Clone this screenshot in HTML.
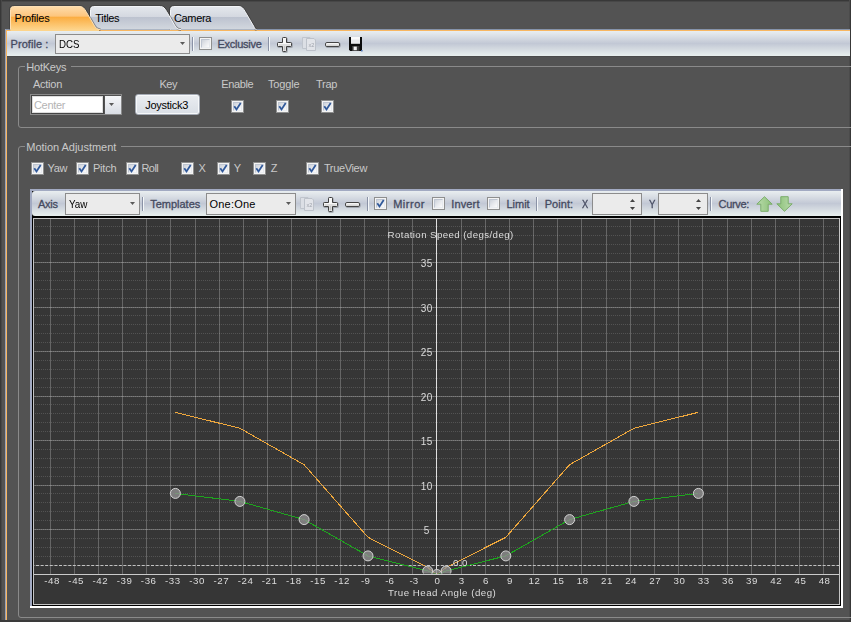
<!DOCTYPE html>
<html><head><meta charset="utf-8"><title>Profiles</title>
<style>
html,body{margin:0;padding:0}
body{width:851px;height:622px;overflow:hidden;background:#535353;position:relative;font-family:"Liberation Sans",Arial,sans-serif}
.abs,.t,.cb,.combo,.sep,.ic,.arr,.ln{position:absolute}
.t{white-space:nowrap;line-height:0;height:0;display:block}
.t::before{content:"";display:inline-block;height:0}
.b{-webkit-text-stroke:0.3px currentColor}
.cb{width:11px;height:11px;border:1px solid #8e8f8f;background:#f4f4f4}
.cbi{position:absolute;left:1px;top:1px;width:9px;height:9px;box-sizing:border-box;border:1px solid #bfc6d2;border-right-color:#e6e9ee;border-bottom-color:#eaedf1;background:linear-gradient(135deg,#cdd2da 0%,#e6e8ec 50%,#fbfbfb 100%)}
.combo{box-sizing:border-box;border:1px solid #8c8c8c;background:#ebebeb}
.sep{width:1px;background:#8a92a6;box-shadow:1px 0 0 #f4f7f9}
.tb{background:linear-gradient(#e9eef0 0%,#d7dce3 25%,#c2c8d5 50%,#d5dbe1 74%,#e8efee 100%)}
</style></head><body>
<!-- window frame -->
<div class="abs" style="left:0;top:0;width:851px;height:2px;background:linear-gradient(#383838 50%,#474747 50%)"></div>
<div class="abs" style="left:0;top:0;width:2px;height:622px;background:linear-gradient(90deg,#383838 50%,#474747 50%)"></div>
<div class="abs" style="left:849px;top:0;width:2px;height:622px;background:linear-gradient(90deg,#4b4b4b 50%,#383838 50%)"></div>
<div class="abs" style="left:0;top:620px;width:851px;height:2px;background:#3a3a3a"></div>
<!-- tab page border -->
<div class="abs" style="left:5px;top:29px;width:845px;height:1px;background:#8593ab"></div>
<div class="abs" style="left:5px;top:29px;width:1px;height:591px;background:#9aa2b8"></div>
<div class="abs" style="left:6px;top:30px;width:844px;height:1px;background:#f8b660"></div>
<div class="abs" style="left:6px;top:30px;width:1px;height:590px;background:#f8b660"></div>
<svg style="position:absolute;left:0;top:0" width="300" height="32" viewBox="0 0 300 32">
<defs>
<linearGradient id="gi" x1="0" y1="0" x2="0" y2="1"><stop offset="0" stop-color="#e4e7ec"/><stop offset=".45" stop-color="#d4d8e0"/><stop offset=".46" stop-color="#bcc2cf"/><stop offset="1" stop-color="#d3d8df"/></linearGradient>
<linearGradient id="go" x1="0" y1="0" x2="0" y2="1"><stop offset="0" stop-color="#fedcab"/><stop offset=".42" stop-color="#fdc57d"/><stop offset=".46" stop-color="#fbad41"/><stop offset="1" stop-color="#fdd48b"/></linearGradient>
</defs>
<path d="M170.5 29.6 V9.5 Q170.5 6.5 173.5 6.5 H239 C242 6.5 243.6 8.9 245 11.4 L253.6 26.1 C254.6 27.9 255.2 29.6 256.5 29.6" fill="none" stroke="#2a2a2a" stroke-opacity=".45" stroke-width="2.6"/>
<path d="M170.5 29.6 V9.5 Q170.5 6.5 173.5 6.5 H239 C242 6.5 243.6 8.9 245 11.4 L253.6 26.1 C254.6 27.9 255.2 29.6 256.5 29.6 Z" fill="url(#gi)"/>
<path d="M170.5 29.6 V9.5 Q170.5 6.5 173.5 6.5 H239 C242 6.5 243.6 8.9 245 11.4 L253.6 26.1 C254.6 27.9 255.2 29.6 256.5 29.6" fill="none" stroke="#f2f4f7" stroke-width="1"/>
<path d="M90.5 29.6 V9.5 Q90.5 6.5 93.5 6.5 H160.5 C163.5 6.5 165.1 8.9 166.5 11.4 L174.5 25.1 C176.1 27.9 177.5 29.6 181.0 29.6" fill="none" stroke="#2a2a2a" stroke-opacity=".45" stroke-width="2.6"/>
<path d="M90.5 29.6 V9.5 Q90.5 6.5 93.5 6.5 H160.5 C163.5 6.5 165.1 8.9 166.5 11.4 L174.5 25.1 C176.1 27.9 177.5 29.6 181.0 29.6 Z" fill="url(#gi)"/>
<path d="M90.5 29.6 V9.5 Q90.5 6.5 93.5 6.5 H160.5 C163.5 6.5 165.1 8.9 166.5 11.4 L174.5 25.1 C176.1 27.9 177.5 29.6 181.0 29.6" fill="none" stroke="#f2f4f7" stroke-width="1"/>
<path d="M10.5 29.6 V9.5 Q10.5 6.5 13.5 6.5 H80 C83 6.5 84.6 8.9 86 11.4 L94 25.1 C95.6 27.9 97 29.6 100.5 29.6" fill="none" stroke="#2a2a2a" stroke-opacity=".45" stroke-width="2.6"/>
<path d="M10.5 29.6 V9.5 Q10.5 6.5 13.5 6.5 H80 C83 6.5 84.6 8.9 86 11.4 L94 25.1 C95.6 27.9 97 29.6 100.5 29.6 Z" fill="url(#go)"/><rect x="10.5" y="29" width="88.5" height="2" fill="#fdd48b"/>
<path d="M10.5 29.6 V9.5 Q10.5 6.5 13.5 6.5 H80 C83 6.5 84.6 8.9 86 11.4 L94 25.1 C95.6 27.9 97 29.6 100.5 29.6" fill="none" stroke="#fde0b4" stroke-width="1"/>
</svg>
<!-- toolbar 1 -->
<div class="abs tb" style="left:7px;top:31px;width:843px;height:25px"></div>
<div class="abs" style="left:7px;top:56px;width:843px;height:1px;background:#4a4a4a"></div>
<div class="combo " style="left:55px;top:34px;width:135px;height:20px"></div><svg class="arr" style="left:180px;top:41.8px" width="5" height="3" viewBox="0 0 5 3"><path d="M0 0H5L2.5 3Z" fill="#5a5a5a"/></svg>
<div class="sep" style="left:192px;top:37px;height:14px"></div>
<div class="cb" style="left:199px;top:37px"><div class="cbi"></div></div>
<div class="sep" style="left:268px;top:37px;height:14px"></div>
<svg class="ic" style="left:277px;top:37px" width="16" height="16" viewBox="0 0 16 16"><path d="M5.5 1.3 Q5.5 .5 6.3 .5 H8.7 Q9.5 .5 9.5 1.3 V5.5 H13.7 Q14.5 5.5 14.5 6.3 V8.7 Q14.5 9.5 13.7 9.5 H9.5 V13.7 Q9.5 14.5 8.7 14.5 H6.3 Q5.5 14.5 5.5 13.7 V9.5 H1.3 Q.5 9.5 .5 8.7 V6.3 Q.5 5.5 1.3 5.5 H5.5 Z" fill="none" stroke="#3a3f4a" stroke-opacity=".3" stroke-width="1.4" transform="translate(.6 .7)"/><path d="M5.5 1.3 Q5.5 .5 6.3 .5 H8.7 Q9.5 .5 9.5 1.3 V5.5 H13.7 Q14.5 5.5 14.5 6.3 V8.7 Q14.5 9.5 13.7 9.5 H9.5 V13.7 Q9.5 14.5 8.7 14.5 H6.3 Q5.5 14.5 5.5 13.7 V9.5 H1.3 Q.5 9.5 .5 8.7 V6.3 Q.5 5.5 1.3 5.5 H5.5 Z" fill="#f7f7f7" stroke="#3e3e3e" stroke-width="1" stroke-linejoin="round"/><path d="M6.5 9 H8.5 V13.5 H6.5Z M1.5 7.6 H13.5 V8.5 H1.5Z" fill="#c4c4c4"/></svg>
<svg class="ic" style="left:302px;top:37px" width="15" height="15" viewBox="0 0 15 15"><path d="M.5 .5 H8 L9.5 2 V11.5 H.5 Z" fill="#dcdfe5" stroke="#c0c5cd"/><path d="M4.5 1.5 H12 L13.5 3 V13.5 H4.5 Z" fill="#e2e4e9" stroke="#bdc2ca"/><g filter="url(#idf)"><text x="6.4" y="9.9" font-size="5.6" font-family="Liberation Sans, sans-serif" fill="#9fa3ac">x2</text></g></svg>
<svg class="ic" style="left:325px;top:42px" width="17" height="7" viewBox="0 0 17 7"><rect x="1.1" y="1.2" width="14" height="4" rx="1.4" fill="none" stroke="#3a3f4a" stroke-opacity=".3" stroke-width="1.4"/><rect x=".5" y=".5" width="14" height="4" rx="1.4" fill="#f5f5f5" stroke="#444" stroke-width="1"/><rect x="1.5" y="2.6" width="12" height="1" fill="#c6c6c6"/></svg>
<svg class="ic" style="left:349px;top:37px" width="14" height="15" viewBox="0 0 14 15"><path d="M0 0 H13 V14 H1.2 L0 12.8 Z" fill="#0c0c0c"/><rect x="2" y="0" width="9" height="6.8" fill="#e9eaec"/><rect x="2" y="0" width="9" height="2.5" fill="#fafafa"/><rect x="3" y="9" width="7.4" height="5" fill="#3a3a3a"/><rect x="4.6" y="9.6" width="3.2" height="3.6" fill="#f0f0f0"/><rect x="12" y="13" width="1.6" height="1.4" fill="#4a6fb0"/></svg>
<!-- HotKeys group -->
<div class="abs" style="left:18px;top:66px;width:840px;height:62px;border:1px solid #8a8a8a;border-radius:3px;box-sizing:border-box"></div>
<div class="abs" style="left:25px;top:64px;width:46px;height:6px;background:#535353"></div>
<!-- action combo -->
<div class="abs" style="left:30px;top:94px;width:92px;height:21px;box-sizing:border-box;border:1px solid #8a8a8a;background:#535353"></div>
<div class="abs" style="left:33px;top:97px;width:69px;height:15px;background:#fff;box-shadow:0 0 0 1px #ddd,0 0 0 2px #454545"></div>
<div class="abs" style="left:105px;top:96px;width:16px;height:18px;background:linear-gradient(#f6f7f9,#d9dde4)"></div>
<svg class="arr" style="left:109px;top:102.5px" width="5" height="3" viewBox="0 0 5 3"><path d="M0 0H5L2.5 3Z" fill="#5a5a5a"/></svg>
<!-- Joystick3 button -->
<div class="abs" style="left:135px;top:94px;width:65px;height:21px;box-sizing:border-box;border:1px solid #a4aab4;background:linear-gradient(#eaedf1,#d9dee5);border-radius:3px;box-shadow:inset 0 0 0 1px #f6f8fa"></div>
<div class="cb" style="left:231px;top:100px"><div class="cbi"></div><svg width="13" height="13" viewBox="0 0 13 13" style="position:absolute;left:-1px;top:-1px"><path d="M3.3 6.2 L5.5 9.4 L9.7 2.9" fill="none" stroke="#31599a" stroke-width="1.8" stroke-linecap="butt" stroke-linejoin="miter"/></svg></div>
<div class="cb" style="left:276px;top:100px"><div class="cbi"></div><svg width="13" height="13" viewBox="0 0 13 13" style="position:absolute;left:-1px;top:-1px"><path d="M3.3 6.2 L5.5 9.4 L9.7 2.9" fill="none" stroke="#31599a" stroke-width="1.8" stroke-linecap="butt" stroke-linejoin="miter"/></svg></div>
<div class="cb" style="left:321px;top:100px"><div class="cbi"></div><svg width="13" height="13" viewBox="0 0 13 13" style="position:absolute;left:-1px;top:-1px"><path d="M3.3 6.2 L5.5 9.4 L9.7 2.9" fill="none" stroke="#31599a" stroke-width="1.8" stroke-linecap="butt" stroke-linejoin="miter"/></svg></div>
<!-- Motion Adjustment group -->
<div class="abs" style="left:18px;top:146px;width:840px;height:472px;border:1px solid #8a8a8a;border-radius:3px;box-sizing:border-box"></div>
<div class="abs" style="left:25px;top:144px;width:96px;height:6px;background:#535353"></div>
<div class="cb" style="left:31px;top:162px"><div class="cbi"></div><svg width="13" height="13" viewBox="0 0 13 13" style="position:absolute;left:-1px;top:-1px"><path d="M3.3 6.2 L5.5 9.4 L9.7 2.9" fill="none" stroke="#31599a" stroke-width="1.8" stroke-linecap="butt" stroke-linejoin="miter"/></svg></div>
<div class="cb" style="left:76px;top:162px"><div class="cbi"></div><svg width="13" height="13" viewBox="0 0 13 13" style="position:absolute;left:-1px;top:-1px"><path d="M3.3 6.2 L5.5 9.4 L9.7 2.9" fill="none" stroke="#31599a" stroke-width="1.8" stroke-linecap="butt" stroke-linejoin="miter"/></svg></div>
<div class="cb" style="left:126px;top:162px"><div class="cbi"></div><svg width="13" height="13" viewBox="0 0 13 13" style="position:absolute;left:-1px;top:-1px"><path d="M3.3 6.2 L5.5 9.4 L9.7 2.9" fill="none" stroke="#31599a" stroke-width="1.8" stroke-linecap="butt" stroke-linejoin="miter"/></svg></div>
<div class="cb" style="left:181px;top:162px"><div class="cbi"></div><svg width="13" height="13" viewBox="0 0 13 13" style="position:absolute;left:-1px;top:-1px"><path d="M3.3 6.2 L5.5 9.4 L9.7 2.9" fill="none" stroke="#31599a" stroke-width="1.8" stroke-linecap="butt" stroke-linejoin="miter"/></svg></div>
<div class="cb" style="left:217px;top:162px"><div class="cbi"></div><svg width="13" height="13" viewBox="0 0 13 13" style="position:absolute;left:-1px;top:-1px"><path d="M3.3 6.2 L5.5 9.4 L9.7 2.9" fill="none" stroke="#31599a" stroke-width="1.8" stroke-linecap="butt" stroke-linejoin="miter"/></svg></div>
<div class="cb" style="left:253px;top:162px"><div class="cbi"></div><svg width="13" height="13" viewBox="0 0 13 13" style="position:absolute;left:-1px;top:-1px"><path d="M3.3 6.2 L5.5 9.4 L9.7 2.9" fill="none" stroke="#31599a" stroke-width="1.8" stroke-linecap="butt" stroke-linejoin="miter"/></svg></div>
<div class="cb" style="left:306px;top:162px"><div class="cbi"></div><svg width="13" height="13" viewBox="0 0 13 13" style="position:absolute;left:-1px;top:-1px"><path d="M3.3 6.2 L5.5 9.4 L9.7 2.9" fill="none" stroke="#31599a" stroke-width="1.8" stroke-linecap="butt" stroke-linejoin="miter"/></svg></div>
<!-- curve editor frame -->
<div class="abs" style="left:30px;top:189px;width:813px;height:419px;background:#fff"></div>
<div class="abs" style="left:30px;top:189px;width:811px;height:417px;background:#a2aac2"></div>
<div class="abs" style="left:32px;top:191px;width:809px;height:415px;background:#000"></div>
<div class="abs tb" style="left:32px;top:191px;width:809px;height:25px;border-radius:3px 0 0 3px"></div>
<div class="abs" style="left:33px;top:218px;width:807px;height:387px;background:#c4c4c4"></div>
<svg id="graph" width="805" height="385" viewBox="34 219 805 385" style="position:absolute;left:34px;top:219px" font-family="Liberation Sans, Arial, sans-serif" font-size="9.7">
<rect x="34" y="219" width="805" height="385" fill="#363636"/>
<line x1="50.5" x2="50.5" y1="219" y2="574.03" stroke="#fff" stroke-opacity="0.24"/>
<line x1="74.5" x2="74.5" y1="219" y2="574.03" stroke="#fff" stroke-opacity="0.24"/>
<line x1="98.5" x2="98.5" y1="219" y2="574.03" stroke="#fff" stroke-opacity="0.24"/>
<line x1="122.5" x2="122.5" y1="219" y2="574.03" stroke="#fff" stroke-opacity="0.24"/>
<line x1="146.5" x2="146.5" y1="219" y2="574.03" stroke="#fff" stroke-opacity="0.24"/>
<line x1="170.5" x2="170.5" y1="219" y2="574.03" stroke="#fff" stroke-opacity="0.24"/>
<line x1="195.5" x2="195.5" y1="219" y2="574.03" stroke="#fff" stroke-opacity="0.24"/>
<line x1="219.5" x2="219.5" y1="219" y2="574.03" stroke="#fff" stroke-opacity="0.24"/>
<line x1="243.5" x2="243.5" y1="219" y2="574.03" stroke="#fff" stroke-opacity="0.24"/>
<line x1="267.5" x2="267.5" y1="219" y2="574.03" stroke="#fff" stroke-opacity="0.24"/>
<line x1="291.5" x2="291.5" y1="219" y2="574.03" stroke="#fff" stroke-opacity="0.24"/>
<line x1="316.5" x2="316.5" y1="219" y2="574.03" stroke="#fff" stroke-opacity="0.24"/>
<line x1="340.5" x2="340.5" y1="219" y2="574.03" stroke="#fff" stroke-opacity="0.24"/>
<line x1="364.5" x2="364.5" y1="219" y2="574.03" stroke="#fff" stroke-opacity="0.24"/>
<line x1="388.5" x2="388.5" y1="219" y2="574.03" stroke="#fff" stroke-opacity="0.24"/>
<line x1="412.5" x2="412.5" y1="219" y2="574.03" stroke="#fff" stroke-opacity="0.24"/>
<line x1="461.5" x2="461.5" y1="219" y2="574.03" stroke="#fff" stroke-opacity="0.24"/>
<line x1="485.5" x2="485.5" y1="219" y2="574.03" stroke="#fff" stroke-opacity="0.24"/>
<line x1="509.5" x2="509.5" y1="219" y2="574.03" stroke="#fff" stroke-opacity="0.24"/>
<line x1="533.5" x2="533.5" y1="219" y2="574.03" stroke="#fff" stroke-opacity="0.24"/>
<line x1="557.5" x2="557.5" y1="219" y2="574.03" stroke="#fff" stroke-opacity="0.24"/>
<line x1="581.5" x2="581.5" y1="219" y2="574.03" stroke="#fff" stroke-opacity="0.24"/>
<line x1="606.5" x2="606.5" y1="219" y2="574.03" stroke="#fff" stroke-opacity="0.24"/>
<line x1="630.5" x2="630.5" y1="219" y2="574.03" stroke="#fff" stroke-opacity="0.24"/>
<line x1="654.5" x2="654.5" y1="219" y2="574.03" stroke="#fff" stroke-opacity="0.24"/>
<line x1="678.5" x2="678.5" y1="219" y2="574.03" stroke="#fff" stroke-opacity="0.24"/>
<line x1="702.5" x2="702.5" y1="219" y2="574.03" stroke="#fff" stroke-opacity="0.24"/>
<line x1="727.5" x2="727.5" y1="219" y2="574.03" stroke="#fff" stroke-opacity="0.24"/>
<line x1="751.5" x2="751.5" y1="219" y2="574.03" stroke="#fff" stroke-opacity="0.24"/>
<line x1="775.5" x2="775.5" y1="219" y2="574.03" stroke="#fff" stroke-opacity="0.24"/>
<line x1="799.5" x2="799.5" y1="219" y2="574.03" stroke="#fff" stroke-opacity="0.24"/>
<line x1="823.5" x2="823.5" y1="219" y2="574.03" stroke="#fff" stroke-opacity="0.24"/>
<line x1="34" x2="839" y1="529.5" y2="529.5" stroke="#fff" stroke-opacity="0.24"/>
<line x1="34" x2="839" y1="485.5" y2="485.5" stroke="#fff" stroke-opacity="0.24"/>
<line x1="34" x2="839" y1="440.5" y2="440.5" stroke="#fff" stroke-opacity="0.24"/>
<line x1="34" x2="839" y1="396.5" y2="396.5" stroke="#fff" stroke-opacity="0.24"/>
<line x1="34" x2="839" y1="351.5" y2="351.5" stroke="#fff" stroke-opacity="0.24"/>
<line x1="34" x2="839" y1="307.5" y2="307.5" stroke="#fff" stroke-opacity="0.24"/>
<line x1="34" x2="839" y1="262.5" y2="262.5" stroke="#fff" stroke-opacity="0.24"/>
<line x1="34" x2="839" y1="565.5" y2="565.5" stroke="#fff" stroke-opacity="0.15" stroke-dasharray="1 1" stroke-dashoffset="1"/>
<line x1="34" x2="839" y1="556.5" y2="556.5" stroke="#fff" stroke-opacity="0.15" stroke-dasharray="1 1" stroke-dashoffset="1"/>
<line x1="34" x2="839" y1="547.5" y2="547.5" stroke="#fff" stroke-opacity="0.15" stroke-dasharray="1 1" stroke-dashoffset="1"/>
<line x1="34" x2="839" y1="538.5" y2="538.5" stroke="#fff" stroke-opacity="0.15" stroke-dasharray="1 1" stroke-dashoffset="1"/>
<line x1="34" x2="839" y1="529.5" y2="529.5" stroke="#fff" stroke-opacity="0.15" stroke-dasharray="1 1" stroke-dashoffset="1"/>
<line x1="34" x2="839" y1="520.5" y2="520.5" stroke="#fff" stroke-opacity="0.15" stroke-dasharray="1 1" stroke-dashoffset="1"/>
<line x1="34" x2="839" y1="511.5" y2="511.5" stroke="#fff" stroke-opacity="0.15" stroke-dasharray="1 1" stroke-dashoffset="1"/>
<line x1="34" x2="839" y1="502.5" y2="502.5" stroke="#fff" stroke-opacity="0.15" stroke-dasharray="1 1" stroke-dashoffset="1"/>
<line x1="34" x2="839" y1="493.5" y2="493.5" stroke="#fff" stroke-opacity="0.15" stroke-dasharray="1 1" stroke-dashoffset="1"/>
<line x1="34" x2="839" y1="485.5" y2="485.5" stroke="#fff" stroke-opacity="0.15" stroke-dasharray="1 1" stroke-dashoffset="1"/>
<line x1="34" x2="839" y1="476.5" y2="476.5" stroke="#fff" stroke-opacity="0.15" stroke-dasharray="1 1" stroke-dashoffset="1"/>
<line x1="34" x2="839" y1="467.5" y2="467.5" stroke="#fff" stroke-opacity="0.15" stroke-dasharray="1 1" stroke-dashoffset="1"/>
<line x1="34" x2="839" y1="458.5" y2="458.5" stroke="#fff" stroke-opacity="0.15" stroke-dasharray="1 1" stroke-dashoffset="1"/>
<line x1="34" x2="839" y1="449.5" y2="449.5" stroke="#fff" stroke-opacity="0.15" stroke-dasharray="1 1" stroke-dashoffset="1"/>
<line x1="34" x2="839" y1="440.5" y2="440.5" stroke="#fff" stroke-opacity="0.15" stroke-dasharray="1 1" stroke-dashoffset="1"/>
<line x1="34" x2="839" y1="431.5" y2="431.5" stroke="#fff" stroke-opacity="0.15" stroke-dasharray="1 1" stroke-dashoffset="1"/>
<line x1="34" x2="839" y1="422.5" y2="422.5" stroke="#fff" stroke-opacity="0.15" stroke-dasharray="1 1" stroke-dashoffset="1"/>
<line x1="34" x2="839" y1="413.5" y2="413.5" stroke="#fff" stroke-opacity="0.15" stroke-dasharray="1 1" stroke-dashoffset="1"/>
<line x1="34" x2="839" y1="404.5" y2="404.5" stroke="#fff" stroke-opacity="0.15" stroke-dasharray="1 1" stroke-dashoffset="1"/>
<line x1="34" x2="839" y1="396.5" y2="396.5" stroke="#fff" stroke-opacity="0.15" stroke-dasharray="1 1" stroke-dashoffset="1"/>
<line x1="34" x2="839" y1="387.5" y2="387.5" stroke="#fff" stroke-opacity="0.15" stroke-dasharray="1 1" stroke-dashoffset="1"/>
<line x1="34" x2="839" y1="378.5" y2="378.5" stroke="#fff" stroke-opacity="0.15" stroke-dasharray="1 1" stroke-dashoffset="1"/>
<line x1="34" x2="839" y1="369.5" y2="369.5" stroke="#fff" stroke-opacity="0.15" stroke-dasharray="1 1" stroke-dashoffset="1"/>
<line x1="34" x2="839" y1="360.5" y2="360.5" stroke="#fff" stroke-opacity="0.15" stroke-dasharray="1 1" stroke-dashoffset="1"/>
<line x1="34" x2="839" y1="351.5" y2="351.5" stroke="#fff" stroke-opacity="0.15" stroke-dasharray="1 1" stroke-dashoffset="1"/>
<line x1="34" x2="839" y1="342.5" y2="342.5" stroke="#fff" stroke-opacity="0.15" stroke-dasharray="1 1" stroke-dashoffset="1"/>
<line x1="34" x2="839" y1="333.5" y2="333.5" stroke="#fff" stroke-opacity="0.15" stroke-dasharray="1 1" stroke-dashoffset="1"/>
<line x1="34" x2="839" y1="324.5" y2="324.5" stroke="#fff" stroke-opacity="0.15" stroke-dasharray="1 1" stroke-dashoffset="1"/>
<line x1="34" x2="839" y1="315.5" y2="315.5" stroke="#fff" stroke-opacity="0.15" stroke-dasharray="1 1" stroke-dashoffset="1"/>
<line x1="34" x2="839" y1="307.5" y2="307.5" stroke="#fff" stroke-opacity="0.15" stroke-dasharray="1 1" stroke-dashoffset="1"/>
<line x1="34" x2="839" y1="298.5" y2="298.5" stroke="#fff" stroke-opacity="0.15" stroke-dasharray="1 1" stroke-dashoffset="1"/>
<line x1="34" x2="839" y1="289.5" y2="289.5" stroke="#fff" stroke-opacity="0.15" stroke-dasharray="1 1" stroke-dashoffset="1"/>
<line x1="34" x2="839" y1="280.5" y2="280.5" stroke="#fff" stroke-opacity="0.15" stroke-dasharray="1 1" stroke-dashoffset="1"/>
<line x1="34" x2="839" y1="271.5" y2="271.5" stroke="#fff" stroke-opacity="0.15" stroke-dasharray="1 1" stroke-dashoffset="1"/>
<line x1="34" x2="839" y1="262.5" y2="262.5" stroke="#fff" stroke-opacity="0.15" stroke-dasharray="1 1" stroke-dashoffset="1"/>
<line x1="34" x2="839" y1="253.5" y2="253.5" stroke="#fff" stroke-opacity="0.15" stroke-dasharray="1 1" stroke-dashoffset="1"/>
<line x1="34" x2="839" y1="244.5" y2="244.5" stroke="#fff" stroke-opacity="0.15" stroke-dasharray="1 1" stroke-dashoffset="1"/>
<line x1="34" x2="839" y1="235.5" y2="235.5" stroke="#fff" stroke-opacity="0.15" stroke-dasharray="1 1" stroke-dashoffset="1"/>
<line x1="34" x2="839" y1="226.5" y2="226.5" stroke="#fff" stroke-opacity="0.15" stroke-dasharray="1 1" stroke-dashoffset="1"/>
<line x1="34" x2="839" y1="565.5" y2="565.5" stroke="#c2c2c2" stroke-width="1" stroke-dasharray="3 1.6" stroke-dashoffset="-2"/>
<line x1="436.5" x2="436.5" y1="219" y2="574.03" stroke="#e0e0e0" stroke-width="1"/>
<clipPath id="cp"><rect x="34" y="219" width="805" height="354.53"/></clipPath>
<g clip-path="url(#cp)">
<polyline points="175.4,412.3 239.9,428.3 304.1,464.7 368.0,537.3 427.7,567.5 436.9,574.5 446.1,567.5 505.8,537.3 569.6,464.7 633.9,428.3 698.4,412.3" fill="none" stroke="#f0a83c" stroke-width="1" shape-rendering="crispEdges"/>
<polyline points="175.4,493.4 239.9,501.4 304.1,519.6 368.0,555.9 427.7,571.0 436.9,574.5 446.1,571.0 505.8,555.9 569.6,519.6 633.9,501.4 698.4,493.4" fill="none" stroke="#1ea51e" stroke-width="1" shape-rendering="crispEdges"/>
<circle cx="175.4" cy="493.4" r="5" fill="#909090" fill-opacity="0.8" stroke="#d2d2d2" stroke-width="1"/>
<circle cx="239.9" cy="501.4" r="5" fill="#909090" fill-opacity="0.8" stroke="#d2d2d2" stroke-width="1"/>
<circle cx="304.1" cy="519.6" r="5" fill="#909090" fill-opacity="0.8" stroke="#d2d2d2" stroke-width="1"/>
<circle cx="368.0" cy="555.9" r="5" fill="#909090" fill-opacity="0.8" stroke="#d2d2d2" stroke-width="1"/>
<circle cx="427.7" cy="571.0" r="5" fill="#909090" fill-opacity="0.8" stroke="#d2d2d2" stroke-width="1"/>
<circle cx="436.9" cy="574.5" r="5" fill="#909090" fill-opacity="0.8" stroke="#d2d2d2" stroke-width="1"/>
<circle cx="446.1" cy="571.0" r="5" fill="#909090" fill-opacity="0.8" stroke="#d2d2d2" stroke-width="1"/>
<circle cx="505.8" cy="555.9" r="5" fill="#909090" fill-opacity="0.8" stroke="#d2d2d2" stroke-width="1"/>
<circle cx="569.6" cy="519.6" r="5" fill="#909090" fill-opacity="0.8" stroke="#d2d2d2" stroke-width="1"/>
<circle cx="633.9" cy="501.4" r="5" fill="#909090" fill-opacity="0.8" stroke="#d2d2d2" stroke-width="1"/>
<circle cx="698.4" cy="493.4" r="5" fill="#909090" fill-opacity="0.8" stroke="#d2d2d2" stroke-width="1"/>
</g>
<line x1="34" x2="839" y1="574.5" y2="574.5" stroke="#cacaca" stroke-width="1"/>
<filter id="idf" x="0" y="0" width="1" height="1" filterUnits="objectBoundingBox"><feOffset dx="0" dy="0"/></filter><g filter="url(#idf)">
<text x="52.0" y="584" text-anchor="middle" fill="#dcdcdc" letter-spacing="0.55">-48</text>
<text x="76.2" y="584" text-anchor="middle" fill="#dcdcdc" letter-spacing="0.55">-45</text>
<text x="100.4" y="584" text-anchor="middle" fill="#dcdcdc" letter-spacing="0.55">-42</text>
<text x="124.6" y="584" text-anchor="middle" fill="#dcdcdc" letter-spacing="0.55">-39</text>
<text x="148.7" y="584" text-anchor="middle" fill="#dcdcdc" letter-spacing="0.55">-36</text>
<text x="172.9" y="584" text-anchor="middle" fill="#dcdcdc" letter-spacing="0.55">-33</text>
<text x="197.1" y="584" text-anchor="middle" fill="#dcdcdc" letter-spacing="0.55">-30</text>
<text x="221.3" y="584" text-anchor="middle" fill="#dcdcdc" letter-spacing="0.55">-27</text>
<text x="245.5" y="584" text-anchor="middle" fill="#dcdcdc" letter-spacing="0.55">-24</text>
<text x="269.6" y="584" text-anchor="middle" fill="#dcdcdc" letter-spacing="0.55">-21</text>
<text x="293.8" y="584" text-anchor="middle" fill="#dcdcdc" letter-spacing="0.55">-18</text>
<text x="318.0" y="584" text-anchor="middle" fill="#dcdcdc" letter-spacing="0.55">-15</text>
<text x="342.2" y="584" text-anchor="middle" fill="#dcdcdc" letter-spacing="0.55">-12</text>
<text x="365.6" y="584" text-anchor="middle" fill="#dcdcdc" letter-spacing="0.2">-9</text>
<text x="389.7" y="584" text-anchor="middle" fill="#dcdcdc" letter-spacing="0.2">-6</text>
<text x="413.9" y="584" text-anchor="middle" fill="#dcdcdc" letter-spacing="0.2">-3</text>
<text x="437.4" y="584" text-anchor="middle" fill="#dcdcdc" letter-spacing="0.2">0</text>
<text x="461.6" y="584" text-anchor="middle" fill="#dcdcdc" letter-spacing="0.2">3</text>
<text x="485.8" y="584" text-anchor="middle" fill="#dcdcdc" letter-spacing="0.2">6</text>
<text x="509.9" y="584" text-anchor="middle" fill="#dcdcdc" letter-spacing="0.2">9</text>
<text x="534.4" y="584" text-anchor="middle" fill="#dcdcdc" letter-spacing="0.55">12</text>
<text x="558.6" y="584" text-anchor="middle" fill="#dcdcdc" letter-spacing="0.55">15</text>
<text x="582.8" y="584" text-anchor="middle" fill="#dcdcdc" letter-spacing="0.55">18</text>
<text x="607.0" y="584" text-anchor="middle" fill="#dcdcdc" letter-spacing="0.55">21</text>
<text x="631.1" y="584" text-anchor="middle" fill="#dcdcdc" letter-spacing="0.55">24</text>
<text x="655.3" y="584" text-anchor="middle" fill="#dcdcdc" letter-spacing="0.55">27</text>
<text x="679.5" y="584" text-anchor="middle" fill="#dcdcdc" letter-spacing="0.55">30</text>
<text x="703.7" y="584" text-anchor="middle" fill="#dcdcdc" letter-spacing="0.55">33</text>
<text x="727.9" y="584" text-anchor="middle" fill="#dcdcdc" letter-spacing="0.55">36</text>
<text x="752.0" y="584" text-anchor="middle" fill="#dcdcdc" letter-spacing="0.55">39</text>
<text x="776.2" y="584" text-anchor="middle" fill="#dcdcdc" letter-spacing="0.55">42</text>
<text x="800.4" y="584" text-anchor="middle" fill="#dcdcdc" letter-spacing="0.55">45</text>
<text x="824.6" y="584" text-anchor="middle" fill="#dcdcdc" letter-spacing="0.55">48</text>
<text x="426.6" y="534.0" font-size="10" text-anchor="middle" fill="#dcdcdc" letter-spacing="0">5</text>
<text x="426.85" y="489.5" font-size="10" text-anchor="middle" fill="#dcdcdc" letter-spacing="0.5">10</text>
<text x="426.85" y="445.0" font-size="10" text-anchor="middle" fill="#dcdcdc" letter-spacing="0.5">15</text>
<text x="426.85" y="400.5" font-size="10" text-anchor="middle" fill="#dcdcdc" letter-spacing="0.5">20</text>
<text x="426.85" y="356.0" font-size="10" text-anchor="middle" fill="#dcdcdc" letter-spacing="0.5">25</text>
<text x="426.85" y="311.5" font-size="10" text-anchor="middle" fill="#dcdcdc" letter-spacing="0.5">30</text>
<text x="426.85" y="267.0" font-size="10" text-anchor="middle" fill="#dcdcdc" letter-spacing="0.5">35</text>
<text x="453" y="565.9" fill="#dcdcdc" letter-spacing="0.4">0.0</text>
<text x="387.6" y="237.7" fill="#dcdcdc" letter-spacing="0.41">Rotation Speed (degs/deg)</text>
<text x="388" y="596.2" fill="#dcdcdc" letter-spacing="0.51">True Head Angle (deg)</text>
</g>
</svg>
<!-- toolbar 2 controls -->
<div class="combo " style="left:65px;top:193px;width:75px;height:22px"></div><svg class="arr" style="left:130px;top:201.8px" width="5" height="3" viewBox="0 0 5 3"><path d="M0 0H5L2.5 3Z" fill="#5a5a5a"/></svg>
<div class="sep" style="left:142px;top:197px;height:14px"></div>
<div class="combo " style="left:206px;top:193px;width:90px;height:22px"></div><svg class="arr" style="left:286px;top:201.8px" width="5" height="3" viewBox="0 0 5 3"><path d="M0 0H5L2.5 3Z" fill="#5a5a5a"/></svg>
<svg class="ic" style="left:300px;top:197px" width="15" height="15" viewBox="0 0 15 15"><path d="M.5 .5 H8 L9.5 2 V11.5 H.5 Z" fill="#dcdfe5" stroke="#c0c5cd"/><path d="M4.5 1.5 H12 L13.5 3 V13.5 H4.5 Z" fill="#e2e4e9" stroke="#bdc2ca"/><g filter="url(#idf)"><text x="6.4" y="9.9" font-size="5.6" font-family="Liberation Sans, sans-serif" fill="#9fa3ac">x2</text></g></svg>
<svg class="ic" style="left:323px;top:197px" width="16" height="16" viewBox="0 0 16 16"><path d="M5.5 1.3 Q5.5 .5 6.3 .5 H8.7 Q9.5 .5 9.5 1.3 V5.5 H13.7 Q14.5 5.5 14.5 6.3 V8.7 Q14.5 9.5 13.7 9.5 H9.5 V13.7 Q9.5 14.5 8.7 14.5 H6.3 Q5.5 14.5 5.5 13.7 V9.5 H1.3 Q.5 9.5 .5 8.7 V6.3 Q.5 5.5 1.3 5.5 H5.5 Z" fill="none" stroke="#3a3f4a" stroke-opacity=".3" stroke-width="1.4" transform="translate(.6 .7)"/><path d="M5.5 1.3 Q5.5 .5 6.3 .5 H8.7 Q9.5 .5 9.5 1.3 V5.5 H13.7 Q14.5 5.5 14.5 6.3 V8.7 Q14.5 9.5 13.7 9.5 H9.5 V13.7 Q9.5 14.5 8.7 14.5 H6.3 Q5.5 14.5 5.5 13.7 V9.5 H1.3 Q.5 9.5 .5 8.7 V6.3 Q.5 5.5 1.3 5.5 H5.5 Z" fill="#f7f7f7" stroke="#3e3e3e" stroke-width="1" stroke-linejoin="round"/><path d="M6.5 9 H8.5 V13.5 H6.5Z M1.5 7.6 H13.5 V8.5 H1.5Z" fill="#c4c4c4"/></svg>
<svg class="ic" style="left:345px;top:202px" width="17" height="7" viewBox="0 0 17 7"><rect x="1.1" y="1.2" width="14" height="4" rx="1.4" fill="none" stroke="#3a3f4a" stroke-opacity=".3" stroke-width="1.4"/><rect x=".5" y=".5" width="14" height="4" rx="1.4" fill="#f5f5f5" stroke="#444" stroke-width="1"/><rect x="1.5" y="2.6" width="12" height="1" fill="#c6c6c6"/></svg>
<div class="sep" style="left:367px;top:197px;height:14px"></div>
<div class="cb" style="left:374px;top:197px"><div class="cbi"></div><svg width="13" height="13" viewBox="0 0 13 13" style="position:absolute;left:-1px;top:-1px"><path d="M3.3 6.2 L5.5 9.4 L9.7 2.9" fill="none" stroke="#31599a" stroke-width="1.8" stroke-linecap="butt" stroke-linejoin="miter"/></svg></div>
<div class="cb" style="left:432px;top:197px"><div class="cbi"></div></div>
<div class="cb" style="left:487px;top:197px"><div class="cbi"></div></div>
<div class="sep" style="left:536px;top:197px;height:14px"></div>
<div class="combo" style="left:592px;top:193px;width:50px;height:22px"></div><svg class="arr" style="left:630px;top:198.5px" width="5" height="3" viewBox="0 0 5 3"><path d="M0 3H5L2.5 0Z" fill="#444"/></svg><svg class="arr" style="left:630px;top:206.5px" width="5" height="3" viewBox="0 0 5 3"><path d="M0 0H5L2.5 3Z" fill="#444"/></svg>
<div class="combo" style="left:658px;top:193px;width:50px;height:22px"></div><svg class="arr" style="left:696px;top:198.5px" width="5" height="3" viewBox="0 0 5 3"><path d="M0 3H5L2.5 0Z" fill="#444"/></svg><svg class="arr" style="left:696px;top:206.5px" width="5" height="3" viewBox="0 0 5 3"><path d="M0 0H5L2.5 3Z" fill="#444"/></svg>
<div class="sep" style="left:710px;top:197px;height:14px"></div>
<svg class="ic" style="left:755.5px;top:196px" width="17" height="16" viewBox="0 0 17 16"><defs><linearGradient id="ga0" x1="0" y1="0" x2="1" y2="0"><stop offset="0" stop-color="#b9dbab"/><stop offset="1" stop-color="#8cc079"/></linearGradient></defs><path d="M8.5 .7 L16.2 8.2 H12.2 V15.3 H4.8 V8.2 H.8 Z" fill="url(#ga0)" stroke="#7bad6b" stroke-width="1" stroke-linejoin="round"/></svg>
<svg class="ic" style="left:775.5px;top:196px" width="17" height="16" viewBox="0 0 17 16"><defs><linearGradient id="ga1" x1="0" y1="0" x2="1" y2="0"><stop offset="0" stop-color="#b9dbab"/><stop offset="1" stop-color="#8cc079"/></linearGradient></defs><path transform="rotate(180 8.5 8)" d="M8.5 .7 L16.2 8.2 H12.2 V15.3 H4.8 V8.2 H.8 Z" fill="url(#ga1)" stroke="#7bad6b" stroke-width="1" stroke-linejoin="round"/></svg>
<span id="tab1" class="t" style="left:14.5px;top:18.19px;font-size:11px;color:#000;letter-spacing:-0.211px;">Profiles</span>
<span id="tab2" class="t" style="left:95.3px;top:18.19px;font-size:11px;color:#000;letter-spacing:-0.312px;">Titles</span>
<span id="tab3" class="t" style="left:174px;top:18.19px;font-size:11px;color:#000;letter-spacing:-0.354px;">Camera</span>
<span id="tprofile" class="t b" style="left:10.5px;top:44.19px;font-size:11px;color:#454a60;letter-spacing:0.078px;">Profile :</span>
<span id="dcs" class="t" style="left:58.5px;top:44.19px;font-size:11px;color:#000;letter-spacing:0.000px;transform:scaleX(0.8823);transform-origin:0 0;">DCS</span>
<span id="excl" class="t b" style="left:217.5px;top:44.19px;font-size:11px;color:#454a60;letter-spacing:-0.274px;">Exclusive</span>
<span id="hotkeys" class="t" style="left:26.3px;top:66.69px;font-size:11px;color:#c9c9c9;letter-spacing:-0.225px;">HotKeys</span>
<span id="action" class="t" style="left:33px;top:83.69px;font-size:11px;color:#c9c9c9;letter-spacing:-0.263px;">Action</span>
<span id="key" class="t" style="left:159.4px;top:83.69px;font-size:11px;color:#c9c9c9;letter-spacing:-0.390px;">Key</span>
<span id="enable" class="t" style="left:221.3px;top:83.69px;font-size:11px;color:#c9c9c9;letter-spacing:-0.378px;">Enable</span>
<span id="toggle" class="t" style="left:268px;top:83.69px;font-size:11px;color:#c9c9c9;letter-spacing:-0.137px;">Toggle</span>
<span id="trap" class="t" style="left:315.9px;top:83.69px;font-size:11px;color:#c9c9c9;letter-spacing:-0.230px;">Trap</span>
<span id="center" class="t" style="left:34px;top:105.19px;font-size:11px;color:#b4b4b4;letter-spacing:-0.339px;">Center</span>
<span id="joy" class="t" style="left:145.2px;top:105.19px;font-size:11px;color:#000;letter-spacing:-0.250px;">Joystick3</span>
<span id="motion" class="t" style="left:26.3px;top:146.69px;font-size:11px;color:#c9c9c9;letter-spacing:-0.029px;">Motion Adjustment</span>
<span id="yaw" class="t" style="left:47.6px;top:168.19px;font-size:11px;color:#c9c9c9;letter-spacing:-0.398px;">Yaw</span>
<span id="pitch" class="t" style="left:93px;top:168.19px;font-size:11px;color:#c9c9c9;letter-spacing:-0.214px;">Pitch</span>
<span id="roll" class="t" style="left:141.4px;top:168.19px;font-size:11px;color:#c9c9c9;letter-spacing:-0.538px;">Roll</span>
<span id="xx" class="t" style="left:198.5px;top:168.19px;font-size:11px;color:#c9c9c9;letter-spacing:-0.844px;">X</span>
<span id="yy" class="t" style="left:233.8px;top:168.19px;font-size:11px;color:#c9c9c9;letter-spacing:-1.144px;">Y</span>
<span id="zz" class="t" style="left:270.8px;top:168.19px;font-size:11px;color:#c9c9c9;letter-spacing:-0.534px;">Z</span>
<span id="trueview" class="t" style="left:323.9px;top:168.19px;font-size:11px;color:#c9c9c9;letter-spacing:-0.345px;">TrueView</span>
<span id="axis" class="t b" style="left:38px;top:204.19px;font-size:11px;color:#454a60;letter-spacing:-0.295px;">Axis</span>
<span id="yaw2" class="t" style="left:68.5px;top:204.19px;font-size:11px;color:#000;letter-spacing:0.000px;transform:scaleX(0.8983);transform-origin:0 0;">Yaw</span>
<span id="templates" class="t b" style="left:150.2px;top:204.19px;font-size:11px;color:#454a60;letter-spacing:-0.005px;">Templates</span>
<span id="oneone" class="t" style="left:209.5px;top:204.19px;font-size:11px;color:#000;letter-spacing:0.208px;">One:One</span>
<span id="mirror" class="t b" style="left:393.2px;top:204.19px;font-size:11px;color:#454a60;letter-spacing:0.514px;">Mirror</span>
<span id="invert" class="t b" style="left:451.3px;top:204.19px;font-size:11px;color:#454a60;letter-spacing:0.131px;">Invert</span>
<span id="limit" class="t b" style="left:506.4px;top:204.19px;font-size:11px;color:#454a60;letter-spacing:0.013px;">Limit</span>
<span id="point" class="t b" style="left:544.7px;top:204.19px;font-size:11px;color:#454a60;letter-spacing:0.060px;">Point:</span>
<span id="px" class="t b" style="left:582px;top:204.19px;font-size:11px;color:#454a60;letter-spacing:0.000px;transform:scaleX(.84);transform-origin:0 0;">X</span>
<span id="py" class="t b" style="left:648.5px;top:204.19px;font-size:11px;color:#454a60;letter-spacing:0.000px;transform:scaleX(.88);transform-origin:0 0;">Y</span>
<span id="curve" class="t b" style="left:718.6px;top:204.19px;font-size:11px;color:#454a60;letter-spacing:-0.334px;">Curve:</span>
</body></html>
